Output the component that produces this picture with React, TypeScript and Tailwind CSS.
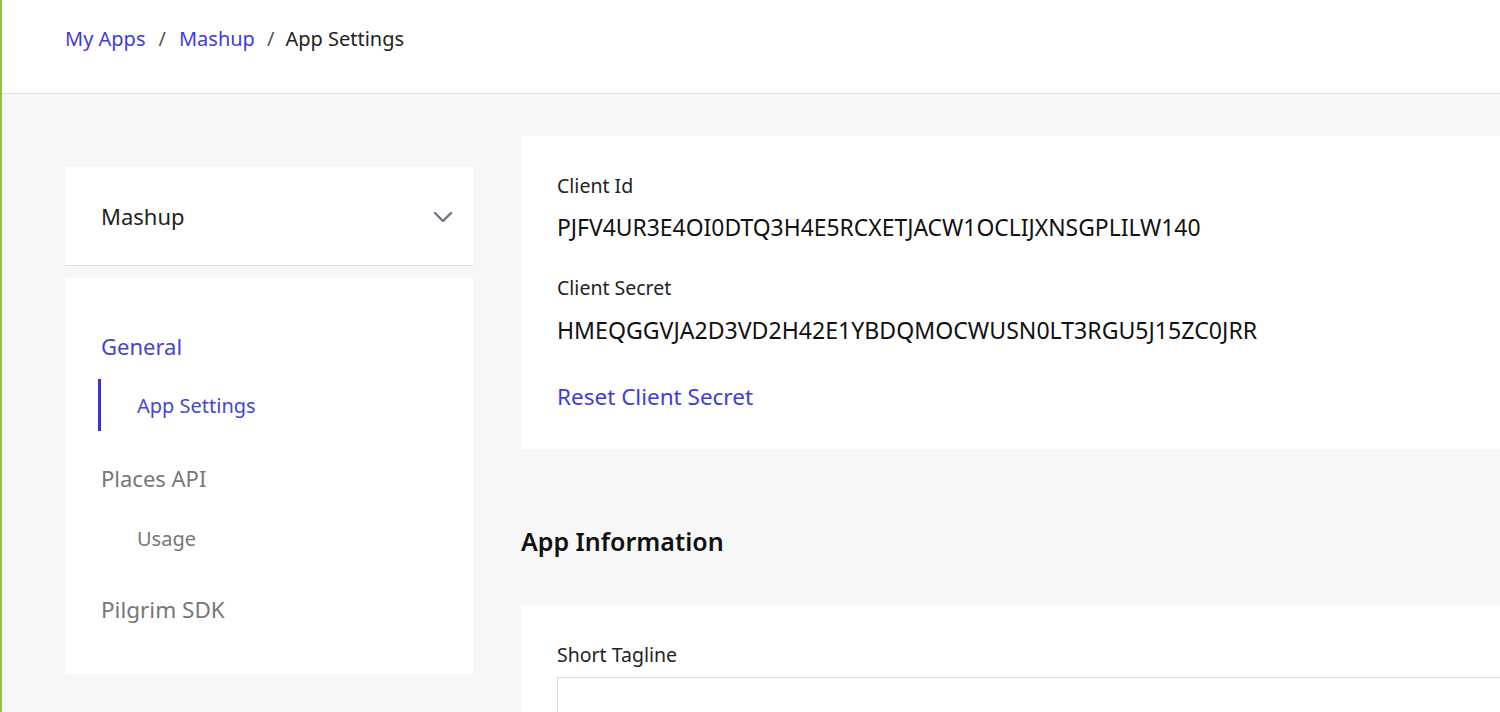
import React from "react";

const font = { fontFamily: '"Noto Sans", "Open Sans", sans-serif' };

export default function App() {
  return (
    <div
      className="w-[1500px] h-[712px] overflow-hidden bg-[#f8f7f7] border-l-2 border-[#8bc34a] text-[#222]"
      style={font}
    >
      <header className="h-[94px] bg-white border-b border-[#e0e0e0] flex items-center pl-[63px] pb-[16px]">
        <nav className="flex items-center text-[20px] leading-[28px]">
          <a className="text-[#3d3dd9]">My Apps</a>
          <span className="mx-[13px] text-[#555]">/</span>
          <a className="text-[#3d3dd9]">Mashup</a>
          <span className="ml-[12px] mr-[11px] text-[#555]">/</span>
          <span className="text-[#222]">App Settings</span>
        </nav>
      </header>

      <div className="flex pl-[63px] gap-[48px]">
        <aside className="w-[408px] shrink-0 mt-[73px]">
          <div className="h-[99px] bg-white border-b border-[#dedede] flex items-center justify-between pl-[36px] pr-[20px]">
            <span className="text-[22px] leading-[32px]">Mashup</span>
            <svg width="20" height="12" viewBox="0 0 20 12" fill="none" className="mt-[1px]">
              <path d="M2 2 L10 10 L18 2" stroke="#71717f" strokeWidth="2.4" strokeLinecap="round" strokeLinejoin="round" />
            </svg>
          </div>
          <div className="mt-[12px] bg-white pt-[52px] pb-[48px]">
            <div className="pl-[36px] text-[22px] leading-[32px] text-[#4343d2]">General</div>
            <div className="mt-[17px] ml-[33px] h-[52px] border-l-[3px] border-[#3535e0] flex items-center pl-[36px] pt-[2px] text-[20px] text-[#4646d4]">
              App Settings
            </div>
            <div className="mt-[31px] pl-[36px] text-[22px] leading-[32px] text-[#777]">Places API</div>
            <div className="mt-[18px] ml-[36px] h-[52px] flex items-center pl-[36px] pt-[2px] text-[20px] text-[#777]">
              Usage
            </div>
            <div className="mt-[30px] pl-[36px] text-[22.5px] leading-[32px] text-[#777]">Pilgrim SDK</div>
          </div>
        </aside>

        <main className="w-[1100px] shrink-0 mt-[42px]">
          <section className="bg-white pt-[36px] pb-[38px] pl-[36px]">
            <div className="text-[19.5px] leading-[28px] text-[#222]">Client Id</div>
            <div className="mt-[14px] text-[22.9px] leading-[28px] text-[#111]">
              PJFV4UR3E4OI0DTQ3H4E5RCXETJACW1OCLIJXNSGPLILW140
            </div>
            <div className="mt-[32px] text-[19.5px] leading-[28px] text-[#222]">Client Secret</div>
            <div className="mt-[14px] text-[23.1px] leading-[28px] text-[#111]">
              HMEQGGVJA2D3VD2H42E1YBDQMOCWUSN0LT3RGU5J15ZC0JRR
            </div>
            <a className="block mt-[39px] text-[22.5px] leading-[28px] text-[#3d3dde]">Reset Client Secret</a>
          </section>

          <h2 className="mt-[74px] text-[25px] leading-[36px] font-semibold text-[#111]">App Information</h2>

          <section className="mt-[46px] bg-white pt-[36px] pl-[36px] h-[200px]">
            <div className="text-[19.5px] leading-[28px] text-[#222]">Short Tagline</div>
            <div className="mt-[8px] h-[60px] border border-[#dcdcdc] bg-white"></div>
          </section>
        </main>
      </div>
    </div>
  );
}
